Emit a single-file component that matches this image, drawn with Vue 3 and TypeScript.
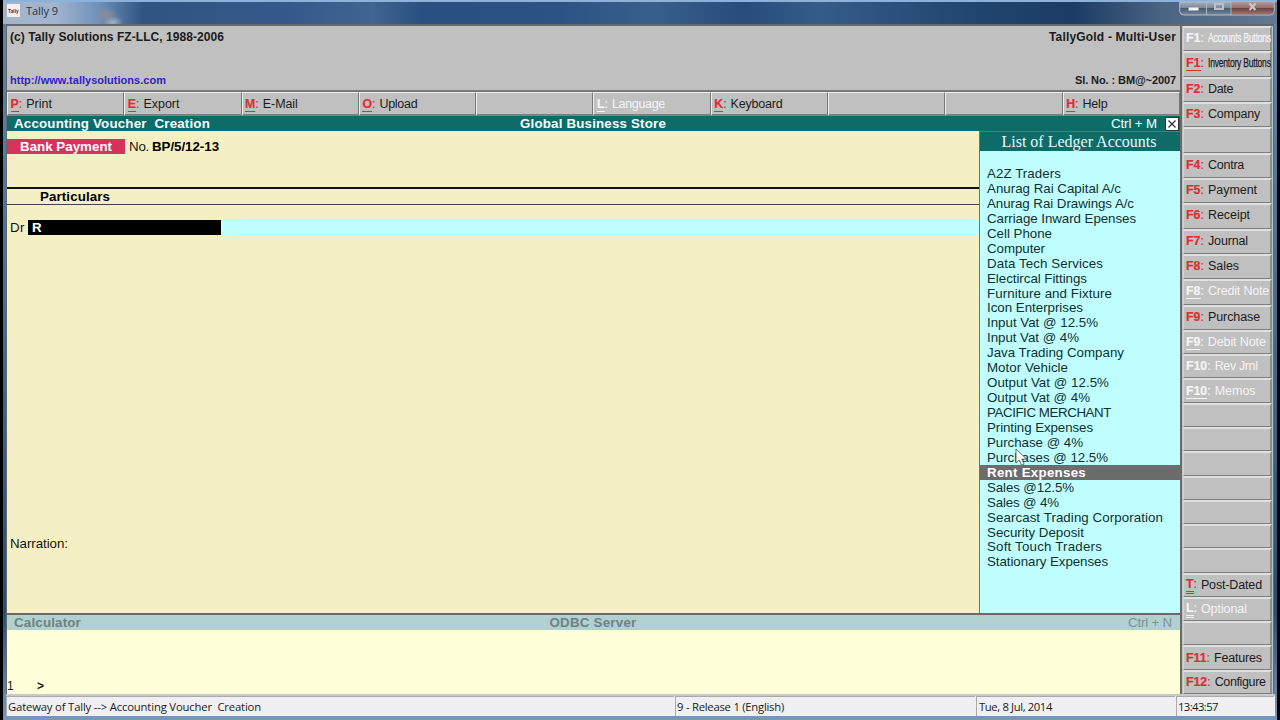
<script setup lang="ts">
interface Key {
  key?: string
  label?: string
  width?: number
  off?: boolean
  under?: number
  tight?: boolean
}

// Spreads the letters of an element so that the text occupies the given width.
const vFit = {
  mounted(el: HTMLElement, binding: { value?: number }) {
    if (!binding.value) return
    const count = (el.textContent ?? '').length
    const range = document.createRange()
    range.selectNodeContents(el)
    const gap = (binding.value - range.getBoundingClientRect().width) / count
    el.style.letterSpacing = `${gap.toFixed(3)}px`
  },
}

const toolbar: Key[] = [
  { key: 'P', label: 'Print', width: 26, under: 1 },
  { key: 'E', label: 'Export', width: 36, under: 1 },
  { key: 'M', label: 'E-Mail', width: 35, under: 1 },
  { key: 'O', label: 'Upload', width: 38, under: 1 },
  {},
  { key: 'L', label: 'Language', width: 53, off: true, under: 1 },
  { key: 'K', label: 'Keyboard', width: 52, under: 1 },
  {},
  {},
  { key: 'H', label: 'Help', width: 25, under: 1 },
]

const upperKeys: Key[] = [
  { key: 'F1', label: 'Accounts Buttons', off: true, tight: true },
  { key: 'F1', label: 'Inventory Buttons', under: 1, tight: true },
  { key: 'F2', label: 'Date', width: 25 },
  { key: 'F3', label: 'Company', width: 52 },
  {},
  { key: 'F4', label: 'Contra', width: 36 },
  { key: 'F5', label: 'Payment', width: 49 },
  { key: 'F6', label: 'Receipt', width: 42 },
  { key: 'F7', label: 'Journal', width: 40 },
  { key: 'F8', label: 'Sales', width: 31 },
  { key: 'F8', label: 'Credit Note', width: 61, off: true, under: 1 },
  { key: 'F9', label: 'Purchase', width: 52 },
]

const lowerKeys: Key[] = [
  { key: 'F9', label: 'Debit Note', width: 58, off: true, under: 1 },
  { key: 'F10', label: 'Rev Jrnl', width: 43, off: true },
  { key: 'F10', label: 'Memos', width: 41, off: true, under: 1 },
  {}, {}, {}, {}, {}, {}, {},
  { key: 'T', label: 'Post-Dated', width: 61, under: 2 },
  { key: 'L', label: 'Optional', width: 46, off: true, under: 2 },
  {},
  { key: 'F11', label: 'Features', width: 48 },
  { key: 'F12', label: 'Configure', width: 51 },
]

const ledgers: [string, number][] = [
  ['A2Z Traders', 74],
  ['Anurag Rai Capital A/c', 134],
  ['Anurag Rai Drawings A/c', 147],
  ['Carriage Inward Epenses', 149],
  ['Cell Phone', 65],
  ['Computer', 58],
  ['Data Tech Services', 116],
  ['Electircal Fittings', 100],
  ['Furniture and Fixture', 125],
  ['Icon Enterprises', 96],
  ['Input Vat @ 12.5%', 111],
  ['Input Vat @ 4%', 92],
  ['Java Trading Company', 137],
  ['Motor Vehicle', 81],
  ['Output Vat @ 12.5%', 122],
  ['Output Vat @ 4%', 103],
  ['PACIFIC MERCHANT', 124],
  ['Printing Expenses', 106],
  ['Purchase @ 4%', 96],
  ['Purchases @ 12.5%', 121],
  ['Rent Expenses', 99],
  ['Sales @12.5%', 87],
  ['Sales @ 4%', 72],
  ['Searcast Trading Corporation', 176],
  ['Security Deposit', 97],
  ['Soft Touch Traders', 115],
  ['Stationary Expenses', 121],
]
const selected = 'Rent Expenses'
</script>

<template>
  <div class="screen">
    <header class="titlebar">
      <svg class="logo" viewBox="0 0 13 13" width="13" height="13">
        <rect width="13" height="13" fill="#f5eeee" />
        <text x="1" y="8.800" font-size="6" font-weight="700" textLength="10.800" lengthAdjust="spacingAndGlyphs" fill="#7c1c20">Tally</text>
      </svg>
      <span v-fit="32" class="app-name">Tally 9</span>
      <div class="controls">
        <svg width="96" height="16" viewBox="0 0 96 16">
          <defs>
            <linearGradient id="glass" x1="0" y1="0" x2="0" y2="1">
              <stop offset="0" stop-color="#a3adb8" />
              <stop offset=".45" stop-color="#7c8999" />
              <stop offset=".5" stop-color="#485b72" />
              <stop offset="1" stop-color="#788796" />
            </linearGradient>
            <linearGradient id="closeGlass" x1="0" y1="0" x2="0" y2="1">
              <stop offset="0" stop-color="#b09d9d" />
              <stop offset=".45" stop-color="#936e6d" />
              <stop offset=".5" stop-color="#70403f" />
              <stop offset="1" stop-color="#9a7775" />
            </linearGradient>
          </defs>
          <path d="M.7 2v9q0 4 4 4h86.500q4 0 4-4V2z" fill="url(#glass)" stroke="#b3bdc8" />
          <path d="M52 2h42.500v9q0 3.500-3.500 3.500H52z" fill="url(#closeGlass)" />
          <path d="M27.500 2v13M52 2v13" stroke="#a9b4c0" />
          <path d="M9.500 9h10" stroke="#f5f5f5" stroke-width="3" />
          <rect x="36" y="4" width="8" height="5" fill="none" stroke="#b9c0c8" stroke-width="2" />
          <path d="M70.500 3.500l6 6.500M76.500 3.500l-6 6.500" stroke="#cfc8c8" stroke-width="2" />
        </svg>
      </div>
    </header>

    <div class="window">
      <div class="workspace">
        <section class="banner">
          <div class="banner-row">
            <b v-fit="214">(c) Tally Solutions FZ-LLC, 1988-2006</b>
            <b v-fit="127">TallyGold - Multi-User</b>
          </div>
          <div class="banner-row lower">
            <b v-fit="156" class="link">http://www.tallysolutions.com</b>
            <b v-fit="101">Sl. No. : BM@~2007</b>
          </div>
        </section>

        <nav class="toolbar">
          <div v-for="(t, i) in toolbar" :key="i" class="tool" :class="{ off: t.off }">
            <template v-if="t.key">
              <span class="hot"><b class="under">{{ t.key }}</b>:</span>
              <span v-fit="t.width">{{ t.label }}</span>
            </template>
          </div>
        </nav>

        <div class="caption">
          <b v-fit="196" class="cap-left">Accounting Voucher&nbsp; Creation</b>
          <b v-fit="146">Global Business Store</b>
          <span class="cap-right">
            <span v-fit="46">Ctrl + M</span>
            <svg class="close" width="14" height="14" viewBox="0 0 14 14">
              <rect x=".5" y=".5" width="13" height="13" fill="#fff" stroke="#333" />
              <path d="M3.500 3.500l7 7M10.500 3.500l-7 7" stroke="#333" stroke-width="1.300" />
            </svg>
          </span>
        </div>

        <main class="body">
          <section class="voucher">
            <div class="voucher-head">
              <div class="kind"><b v-fit="92">Bank Payment</b></div>
              <span v-fit="20">No.</span>
              <b v-fit="67" class="number">BP/5/12-13</b>
            </div>
            <div class="columns"><b v-fit="70">Particulars</b></div>
            <div class="entry">
              <span v-fit="15" class="side">Dr</span>
              <b class="field">R</b>
            </div>
            <div class="narration"><span v-fit="58">Narration:</span></div>
          </section>

          <aside class="ledger">
            <div class="ledger-title"><span v-fit="155">List of Ledger Accounts</span></div>
            <ul>
              <li v-for="[name, w] in ledgers" :key="name" :class="{ selected: name === selected }">
                <span v-fit="w">{{ name }}</span>
              </li>
            </ul>
            <svg class="pointer" width="13" height="19" viewBox="0 0 13 19">
              <path d="M1 1v14l3.300-3 2.300 5.300 2.500-1.100-2.300-5.100h4.700z" fill="#fff" stroke="#555b60" stroke-width=".9" />
            </svg>
          </aside>
        </main>

        <div class="caption calc">
          <b v-fit="67" class="cap-left">Calculator</b>
          <b v-fit="87">ODBC Server</b>
          <span v-fit="44" class="cap-right">Ctrl + N</span>
        </div>
        <div class="tape"><span class="line-no">1</span><b>&gt;</b></div>
      </div>

      <aside class="keys">
        <div v-for="(k, i) in upperKeys" :key="'u' + i" class="key tall" :class="{ off: k.off }">
          <template v-if="k.key">
            <span v-fit="18" class="hot"><b :class="{ under: k.under }">{{ k.key }}</b>:</span>
            <span v-fit="k.width" :class="{ tight: k.tight }">{{ k.label }}</span>
          </template>
        </div>
        <div v-for="(k, i) in lowerKeys" :key="'l' + i" class="key" :class="{ off: k.off }">
          <template v-if="k.key">
            <span class="hot"><b :class="{ under: k.under, twice: k.under === 2 }">{{ k.key }}</b>:</span>
            <span v-fit="k.width">{{ k.label }}</span>
          </template>
        </div>
      </aside>
    </div>

    <footer class="status">
      <div class="cell path"><span v-fit="253">Gateway of Tally --&gt; Accounting Voucher&nbsp; Creation</span></div>
      <div class="cell release"><span v-fit="107">9 - Release 1 (English)</span></div>
      <div class="cell date"><span v-fit="73">Tue, 8 Jul, 2014</span></div>
      <div class="cell"><span v-fit="40">13:43:57</span></div>
    </footer>
  </div>
</template>

<style>
html, body { background: #000; overflow: hidden; }
</style>

<style scoped>
* { box-sizing: border-box; }
.screen {
  width: 1274px;
  height: 720px;
  margin-left: 3px;
  display: flex;
  flex-direction: column;
  background: linear-gradient(#5f87ad, #3d6a92 50%, #234f78 85%, #7897bd);
  font: 13.330px/15px "Liberation Sans", Arial, sans-serif;
  color: #1b1b1b;
  white-space: nowrap;
}
.titlebar {
  height: 24px;
  flex: none;
  display: flex;
  align-items: flex-start;
  padding-left: 4px;
  border-top: 2px solid #8cb2da;
  background:
    radial-gradient(ellipse 12px 8px at 103px 13px, #8c8d98cc 30%, transparent),
    radial-gradient(ellipse 10px 6px at 110px 20px, #c9ced9aa, transparent),
    linear-gradient(90deg, #a3b4ca, #a2b5ce 4%, #6f91bb 7.500%, #305580 11%, #32598a 22%, #3f6691 29%, #285080 33%, #2b5484 44%, #38608c 51%, #264d7c 58%, #345d89 64%, #21466f 76%, #1b3c63 84%, #4a6482 91%, #627991);
}
.logo { margin-top: 2px; }
.app-name { margin: 1px 0 0 6px; font: 11px/15px "Open Sans", "Noto Sans", sans-serif; color: #263347; }
.controls { margin: -2px 2px 0 auto; height: 16px; }
.window {
  height: 670px;
  flex: none;
  margin: 0 3px;
  display: flex;
  border: solid #64686c;
  border-width: 2px 1px 0;
  background: #c0c0c0;
}
.workspace { width: 1175px; display: flex; flex-direction: column; border-right: 2px solid #6b6b6b; }
.banner { height: 66px; padding: 4px 4px 0 3px; border-bottom: 2px solid #777; flex: none; font-size: 12px; }
.banner-row { display: flex; justify-content: space-between; }
.banner-row.lower { margin-top: 27px; font-size: 11px; line-height: 16px; }
.link { color: #3121c6; }
.toolbar { height: 24px; flex: none; display: flex; }
.tool {
  flex: 1 1 0;
  min-width: 0;
  display: flex;
  gap: 4px;
  padding: 4px 0 0 2.500px;
  border: solid;
  border-width: 1px 1px 2px 1px;
  border-color: #ededed #777 #808080 #ededed;
  font-size: 12.500px;
}
.hot { color: #dc2f35; font-size: 12.300px; -webkit-text-stroke: .2px; }
.under { display: inline-block; border-bottom: 1px solid; line-height: 14px; height: 15px; }
.off, .off .hot { color: #f4f4f4; }
.caption {
  height: 15px;
  flex: none;
  display: grid;
  grid-template-columns: 1fr auto 1fr;
  padding-right: 1px;
  background: #0e6c68;
  color: #f2ffff;
}
.cap-left { padding-left: 7px; justify-self: start; }
.cap-right { justify-self: end; display: flex; gap: 8px; }
.close { margin-top: 1px; }
.body { height: 484px; flex: none; display: flex; background: #f5f0c4; border-bottom: 2px solid #6a6b64; }
.voucher { width: 972px; flex: none; color: #151515; }
.voucher-head { height: 56px; padding-top: 8px; display: flex; }
.kind { width: 118px; height: 15px; background: #d6335c; color: #fff; text-align: center; margin-right: 4px; }
.number { margin-left: 3px; color: #000; }
.columns { height: 18px; border-top: 2px solid #111; border-bottom: 1px solid #444; padding-left: 33px; color: #000; }
.entry { margin-top: 15px; height: 15px; display: flex; background: #c0ffff; }
.side { padding-left: 3px; width: 21px; background: #f5f0c4; }
.field { width: 193px; background: #000; color: #fff; padding-left: 4px; }
.narration { margin: 301px 0 0 3px; }
.ledger { position: relative; flex: 1; background: #c0ffff; border-left: 1px solid #5b7d7d; color: #103030; }
.ledger-title {
  height: 20px;
  padding-right: 2px;
  background: #0e6c68;
  border-top: 1px solid #3c8681;
  color: #e5fbfa;
  text-align: center;
  font: 16px/19px "Liberation Serif", "Times New Roman", serif;
}
ul { list-style: none; margin: 15px 0 0; padding: 0; }
li { height: 14.950px; padding-left: 7px; line-height: 15px; }
li.selected { background: #6c6c6c; color: #fff; font-weight: 700; }
.pointer { position: absolute; left: 35px; top: 317px; }
.calc { background: #b1d0cf; color: #6c8381; }
.calc .cap-right { padding-right: 7px; color: #7c9391; display: block; }
.tape { flex: 1; background: #ffffd8; display: flex; align-items: flex-end; font-size: 12px; }
.line-no { width: 30px; }
.keys { flex: 1; padding: 0 1px 0 1px; }
.key {
  height: 24.270px;
  width: 89px;
  display: flex;
  align-items: center;
  gap: 4px;
  padding-left: 2px;
  border: solid;
  border-width: 2px 2px 1px 1px;
  border-color: #e0e0e0 #8d8d8d #7c7c7c #d6d6d6;
  font-size: 12.500px;
}
.key.tall { height: 25.330px; padding-bottom: 1px; }
.twice { border-bottom: 3px double; height: 17px; }
.tight { letter-spacing: -.3px; transform: scaleX(.68); transform-origin: left; -webkit-text-stroke: .25px; }
.status {
  height: 22px;
  flex: none;
  margin: 0 2px 4px 3px;
  display: flex;
  border-top: 2px solid #c9c9c6;
  background: #f0f0f2;
  font: 11.300px/19px "Open Sans", "Noto Sans", sans-serif;
}
.cell { border-top: 1px solid #aaa; border-left: 1px solid #aaa; margin-right: 1px; flex: 1; padding-left: 1px; }
.path { flex: 0 0 668px; }
.release { flex: 0 0 300px; }
.date { flex: 0 0 199px; padding-left: 2px; }
</style>
